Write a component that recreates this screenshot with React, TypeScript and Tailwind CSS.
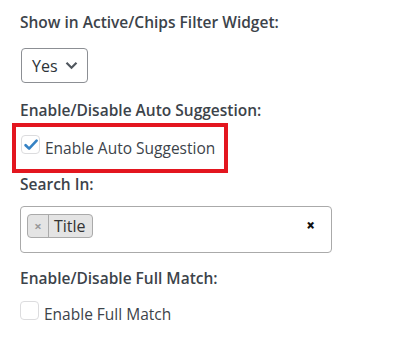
export default function App() {
  return (
    <div className="min-h-screen bg-white pl-5 pt-[12px] font-['Open_Sans',sans-serif] text-[15.5px] text-[#3c434a]">
      {/* Active/Chips */}
      <p className="font-semibold leading-[21px]">Show in Active/Chips Filter Widget:</p>
      <div className="mt-[15px] ml-px flex h-[35px] w-[67px] items-center justify-between rounded border border-[#8c8f94] pl-[10px] pr-[9px] text-[16px] text-[#2c3338]">
        <span>Yes</span>
        <svg width="13" height="9" viewBox="0 0 13 9" fill="none">
          <path d="M1.5 1.8 6.5 6.8 11.5 1.8" stroke="#50575e" strokeWidth="2.2" />
        </svg>
      </div>

      {/* Auto suggestion */}
      <p className="mt-[17px] font-semibold leading-[21px]">Enable/Disable Auto Suggestion:</p>
      <div className="-ml-[8px] mt-[2px] flex h-[50px] w-[216px] items-end border-4 border-[#e3161f] pb-[11px] pl-[5px]">
        <label className="flex items-end gap-[5px] leading-[19px]">
          <span className="mb-[4px] flex h-[19px] w-[19px] items-center justify-center rounded-[4px] border border-[#dcdcde] bg-white">
            <svg width="14" height="12" viewBox="0 0 14 12" fill="none">
              <path d="M1.6 6.2 5.1 9.6 12.6 1.6" stroke="#3582c4" strokeWidth="2.6" strokeLinecap="round" strokeLinejoin="round" />
            </svg>
          </span>
          <span>Enable Auto Suggestion</span>
        </label>
      </div>

      {/* Search in */}
      <p className="mt-[1px] font-semibold leading-[21px]">Search In:</p>
      <div className="mt-[11px] flex h-[47px] w-[312px] items-start justify-between rounded border border-[#aaa] pl-[6px] pr-[16px] pt-[7px]">
        <div className="flex h-[24px] items-stretch rounded border border-[#aaa] bg-[#e4e4e4] text-[16px] leading-[22px] text-[#333]">
          <span className="flex w-[21px] items-center justify-center border-r border-[#aaa] text-[13px] font-bold text-[#999]">×</span>
          <span className="pl-[5px] pr-[6px]">Title</span>
        </div>
        <span className="mt-[3px] text-[15px] font-extrabold leading-[16px] text-[#111]">×</span>
      </div>

      {/* Full match */}
      <p className="mt-[15px] font-semibold leading-[21px]">Enable/Disable Full Match:</p>
      <label className="mt-[12px] flex items-end gap-[5px] leading-[19px]">
        <span className="mb-[4px] h-[19px] w-[19px] rounded-[4px] border border-[#dcdcde] bg-white" />
        <span>Enable Full Match</span>
      </label>
    </div>
  );
}
